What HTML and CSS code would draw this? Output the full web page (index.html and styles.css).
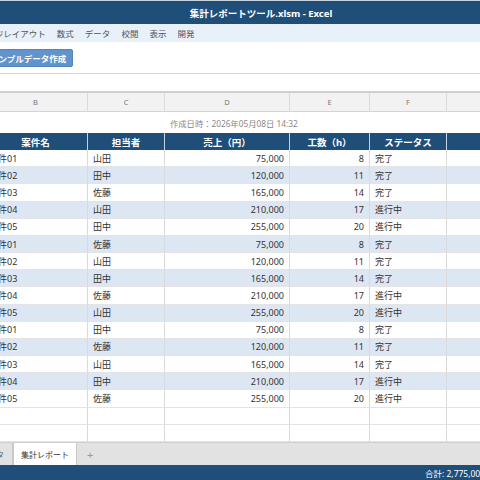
FILE: index.html
```html
<!DOCTYPE html>
<html lang="ja">
<head>
    <meta charset="UTF-8">
    <meta name="viewport" content="width=device-width, initial-scale=1.0">
    <title>集計レポートツール.xlsm - Excel</title>
    <link rel="stylesheet" href="styles.css">
</head>
<body>
    <div class="app">
        <div class="titlebar">集計レポートツール.xlsm - Excel</div>

        <div class="menu">
            <span>ページレイアウト</span>
            <span>数式</span>
            <span>データ</span>
            <span>校閲</span>
            <span>表示</span>
            <span>開発</span>
        </div>

        <div class="ribbon">
            <button class="macro-btn">サンプルデータ作成</button>
        </div>

        <div class="formula-bar"></div>

        <div class="sheet" id="sheet">
            <div class="row col-head">
                <div></div><div>A</div><div>B</div><div>C</div><div>D</div><div>E</div><div>F</div><div>G</div>
            </div>
            <div class="row date-row">
                <div class="rownum">1</div><div></div><div></div><div></div>
                <div class="date-cell">作成日時：2026年05月08日 14:32</div>
                <div></div><div></div>
            </div>
            <div class="row head-row">
                <div class="rownum">2</div><div></div>
                <div>案件名</div><div>担当者</div><div>売上（円）</div><div>工数（h）</div><div>ステータス</div><div></div>
            </div>
        </div>

        <div class="tabs">
            <div class="tab">データ</div>
            <div class="tab active">集計レポート</div>
            <div class="tab add">+</div>
        </div>

        <div class="statusbar">合計: 2,775,000</div>
    </div>

    <script>
        // 集計データ
        const rows = [
            ['案件01', '山田', 75000, 8, '完了'],
            ['案件02', '田中', 120000, 11, '完了'],
            ['案件03', '佐藤', 165000, 14, '完了'],
            ['案件04', '山田', 210000, 17, '進行中'],
            ['案件05', '田中', 255000, 20, '進行中'],
            ['案件01', '佐藤', 75000, 8, '完了'],
            ['案件02', '山田', 120000, 11, '完了'],
            ['案件03', '田中', 165000, 14, '完了'],
            ['案件04', '佐藤', 210000, 17, '進行中'],
            ['案件05', '山田', 255000, 20, '進行中'],
            ['案件01', '田中', 75000, 8, '完了'],
            ['案件02', '佐藤', 120000, 11, '完了'],
            ['案件03', '山田', 165000, 14, '完了'],
            ['案件04', '田中', 210000, 17, '進行中'],
            ['案件05', '佐藤', 255000, 20, '進行中'],
            null,
            null
        ];

        const sheet = document.getElementById('sheet');
        rows.forEach((r, i) => {
            const row = document.createElement('div');
            row.className = 'row data-row' + (i % 2 === 1 && r ? ' alt' : '');
            const cells = r
                ? [i + 3, '', r[0], r[1], r[2].toLocaleString('en-US'), r[3], r[4], '']
                : [i + 3, '', '', '', '', '', '', ''];
            cells.forEach((v, j) => {
                const c = document.createElement('div');
                if (j === 0) c.className = 'rownum';
                if (j === 4 || j === 5) c.className = 'num';
                c.textContent = v;
                row.appendChild(c);
            });
            sheet.appendChild(row);
        });
    </script>
</body>
</html>
```

FILE: styles.css
```css
* {
    margin: 0;
    padding: 0;
    box-sizing: border-box;
}
body {
    width: 480px;
    height: 480px;
    overflow: hidden;
    font-family: "Noto Sans", "Noto Sans CJK JP", sans-serif;
    font-size: 9px;
    color: #333;
    background: #fff;
}
.app {
    width: 658px;
    height: 480px;
    margin-left: -68px;
    display: flex;
    flex-direction: column;
}
.titlebar {
    height: 24px;
    border-top: 1px solid #c9d3de;
    background-color: #1f4e79;
    color: white;
    font-weight: bold;
    font-size: 9.5px;
    display: flex;
    align-items: center;
    justify-content: center;
}
.menu {
    height: 18px;
    background-color: #e8f0fa;
    display: flex;
    align-items: center;
    gap: 11px;
    padding-left: 46px;
    font-size: 8.5px;
    color: #555;
}
.ribbon {
    height: 32px;
    border-bottom: 1px solid #d6d6d6;
    padding: 7px 0 0 51px;
}
.macro-btn {
    height: 18px;
    padding: 0 6px;
    background-color: #6193cc;
    border: 1px solid #5385be;
    border-radius: 2px;
    color: white;
    font-family: inherit;
    font-size: 8.5px;
    font-weight: bold;
}
.formula-bar {
    height: 19px;
    border-bottom: 2px solid #d0d0d0;
}
.sheet {
    flex: 1;
    overflow: hidden;
}
.row {
    display: grid;
    grid-template-columns: 32px 20px 104px 77px 125px 80px 77px 1fr;
    height: 17.17px;
}
.row > div {
    border-right: 1px solid #dadada;
    border-bottom: 1px solid #e4e4e4;
    padding: 0 5px;
    display: flex;
    align-items: center;
    white-space: nowrap;
    overflow: hidden;
}
.col-head {
    height: 19px;
    background-color: #f2f2f2;
    color: #777;
    font-size: 7.5px;
}
.col-head > div {
    justify-content: center;
    border-bottom: 1px solid #d4d4d4;
}
.date-row {
    height: 21px;
}
.date-row > div {
    border: none;
}
.date-row .date-cell {
    grid-column: span 2;
    overflow: visible;
    font-size: 8.3px;
    color: #888;
}
.head-row > div {
    background-color: #1f4e79;
    color: white;
    font-weight: bold;
    font-size: 9.5px;
    justify-content: center;
    border-right: 1px solid #c6d2de;
    border-bottom: none;
}
.head-row > div:nth-child(-n+2) {
    background-color: #fff;
    color: #777;
    border-right: 1px solid #dadada;
}
.rownum {
    background-color: #f2f2f2;
    color: #777;
    justify-content: center;
}
.data-row.alt > div {
    background-color: #dde7f3;
}
.data-row.alt > .rownum {
    background-color: #f2f2f2;
}
.data-row .num {
    justify-content: flex-end;
}
.tabs {
    height: 23px;
    background-color: #e2e2e2;
    border-top: 1px solid #cfcfcf;
    display: flex;
    align-items: flex-end;
    padding-left: 40px;
}
.tab {
    height: 22px;
    padding: 0 8px;
    display: flex;
    align-items: center;
    border-right: 1px solid #c8c8c8;
    font-size: 8px;
    color: #666;
}
.tab.active {
    padding: 0 7px;
    background-color: white;
    color: #333;
    border-left: 1px solid #c8c8c8;
    border-right: 1px solid #c8c8c8;
}
.tab.add {
    border: none;
    padding: 0 10px;
    color: #999;
    font-size: 11px;
}
.statusbar {
    height: 15px;
    background-color: #1f4e79;
    color: white;
    font-size: 8.5px;
    display: flex;
    align-items: center;
    padding-left: 493px;
}
```
